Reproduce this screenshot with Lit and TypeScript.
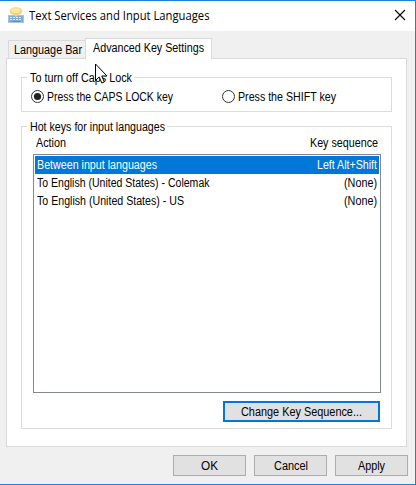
import { LitElement, html, css, svg } from "lit";
import { customElement, property } from "lit/decorators.js";

/** A single-line label condensed or expanded to take up a given width. */
@customElement("fit-text")
class FitText extends LitElement {
  @property({ type: Number }) width = 0;
  @property() text = "";

  static styles = css`
    :host { display: inline-block; line-height: 16px; height: 16px; white-space: nowrap; flex: none; }
    span { display: inline-block; transform-origin: 0 0; }
  `;

  updated() {
    const span = this.renderRoot.querySelector("span") as HTMLElement;
    span.style.transform = "none";
    const scale = this.width / span.getBoundingClientRect().width;
    span.style.transform = `scaleX(${scale.toFixed(4)})`;
    this.style.width = this.width + "px";
  }

  render() {
    return html`<span>${this.text}</span>`;
  }
}

const t = (text: string, width: number) => html`<fit-text .text=${text} .width=${width}></fit-text>`;

const appIcon = svg`
  <svg class="app-icon" width="17" height="17" viewBox="0 0 17 17">
    <rect x="0.5" y="8.5" width="15" height="7" fill="#7fabd6" stroke="#a9c4dc"/>
    <path d="M2 10.5h12M2 12.5h12" stroke="#dcecf8" stroke-dasharray="2 1"/>
    <path d="M4 14.5h8" stroke="#5f8fc0"/>
    <path d="M8 0.3C11.8 0.3 14.3 2 14.3 4.3S11.8 8 9.5 8.1L8 10.6 6.6 8.1C4 7.9 1.7 6.5 1.7 4.3S4.2 0.3 8 0.3Z" fill="#f7d27c"/>
    <ellipse cx="7.5" cy="3.5" rx="4.5" ry="2.5" fill="#fbe6a4"/>
  </svg>`;

const rows = [
  { action: "Between input languages", aw: 120, keys: "Left Alt+Shift", kw: 60, on: true },
  { action: "To English (United States) - Colemak", aw: 172.5, keys: "(None)", kw: 33, on: false },
  { action: "To English (United States) - US", aw: 147, keys: "(None)", kw: 33, on: false },
];

@customElement("app-root")
class AppRoot extends LitElement {
  static styles = css`
    * { box-sizing: border-box; }
    :host {
      display: flex; flex-direction: column; box-sizing: border-box; position: relative;
      width: 416px; height: 485px; overflow: hidden; background: #f0f0f0; color: #000;
      border: 1px solid #1883d7; border-left: 0;
      font: 12px/16px "Liberation Sans", Arial, sans-serif;
    }
    .title { display: flex; align-items: center; height: 30px; background: #fff; padding: 0 9px 0 8px; flex: none; font-family: "Open Sans", "Noto Sans", sans-serif; }
    .app-icon { margin: -1px 4px 0 0; }
    .close { margin: -2px 0 0 auto; }
    .tabs { display: flex; align-items: flex-end; height: 28px; padding-left: 8px; flex: none; z-index: 1; }
    .tab { border: 1px solid #d9d9d9; }
    .tab.back { width: 77px; height: 19px; padding: 1px 0 0 5px; border-right: 0; }
    .tab.front { width: 127px; height: 21px; padding: 1px 0 0 7px; border-bottom: 0; background: #fff; }
    .panel { margin-left: 6px; width: 401px; height: 389px; margin-top: -1px; background: #fff; border: 1px solid #d9d9d9; padding: 18px 14px 0; flex: none; }
    .group { border: 1px solid #dcdcdc; width: 371px; }
    .legend { display: flex; width: max-content; background: #fff; margin: -8px 0 0 5px; padding: 0 2px 0 3px; height: 16px; }
    .caps { height: 35px; }
    .radios { display: flex; height: 16px; margin: 3px 0 0 9px; }
    .choice { display: flex; flex: none; width: 191px; align-items: center; gap: 3px; }
    .choice + .choice { width: auto; }
    .choice svg { flex: none; margin-top: -1px; }
    .hot { height: 303px; margin-top: 14px; }
    .heads { display: flex; justify-content: space-between; padding: 0 13px 0 14px; height: 19px; }
    .list { margin-left: 11px; width: 348px; height: 239px; border: 1px solid #828790; padding: 1px; }
    .row { display: flex; justify-content: space-between; height: 18px; padding: 1px 2px; }
    .row.on { background: #0078d7; color: #fff; }
    button { display: flex; align-items: center; justify-content: center; height: 21px; width: 73px; margin: 0; padding: 0; background: #e1e1e1; border: 1px solid #adadad; color: #000; font: inherit; }
    .change { width: 157px; border: 2px solid #0078d7; margin: 8px 0 0 201px; }
    .foot { display: flex; gap: 8px; margin: 8px 0 0 173px; }
    .cursor { position: absolute; left: 95px; top: 62px; }
  `;

  radio(on: boolean) {
    return html`<svg width="13" height="13" viewBox="0 0 13 13">
      <circle cx="6.5" cy="6.5" r="6" fill="#fff" stroke="#333"/>
      ${on ? svg`<circle cx="6.5" cy="6.5" r="3.6" fill="#222"/>` : null}
    </svg>`;
  }

  render() {
    return html`
      <div class="title">
        ${appIcon}${t("Text Services and Input Languages", 180.5)}
        <svg class="close" width="12" height="12" viewBox="0 0 12 12"><path d="M1 1L11 11M11 1L1 11" stroke="#000" stroke-width="1.1"/></svg>
      </div>
      <div class="tabs">
        <div class="tab back">${t("Language Bar", 68)}</div>
        <div class="tab front">${t("Advanced Key Settings", 111)}</div>
      </div>
      <div class="panel">
        <div class="group caps">
          <div class="legend">${t("To turn off Caps Lock", 102)}</div>
          <div class="radios">
            <div class="choice">${this.radio(true)}${t("Press the CAPS LOCK key", 126)}</div>
            <div class="choice">${this.radio(false)}${t("Press the SHIFT key", 98)}</div>
          </div>
        </div>
        <div class="group hot">
          <div class="legend">${t("Hot keys for input languages", 135)}</div>
          <div class="heads">${t("Action", 30)}${t("Key sequence", 68)}</div>
          <div class="list">
            ${rows.map((r) => html`<div class="row ${r.on ? "on" : ""}">${t(r.action, r.aw)}${t(r.keys, r.kw)}</div>`)}
          </div>
          <button class="change">${t("Change Key Sequence...", 121)}</button>
        </div>
      </div>
      <div class="foot">
        <button>${t("OK", 17)}</button>
        <button>${t("Cancel", 34)}</button>
        <button>${t("Apply", 27)}</button>
      </div>
      <svg class="cursor" width="13" height="21" viewBox="0 0 13 21">
        <path d="M0.5 1V17.5L4.2 14L6.8 20L9.3 18.9L6.8 13H12Z" fill="#fff" stroke="#000"/>
      </svg>
    `;
  }
}
